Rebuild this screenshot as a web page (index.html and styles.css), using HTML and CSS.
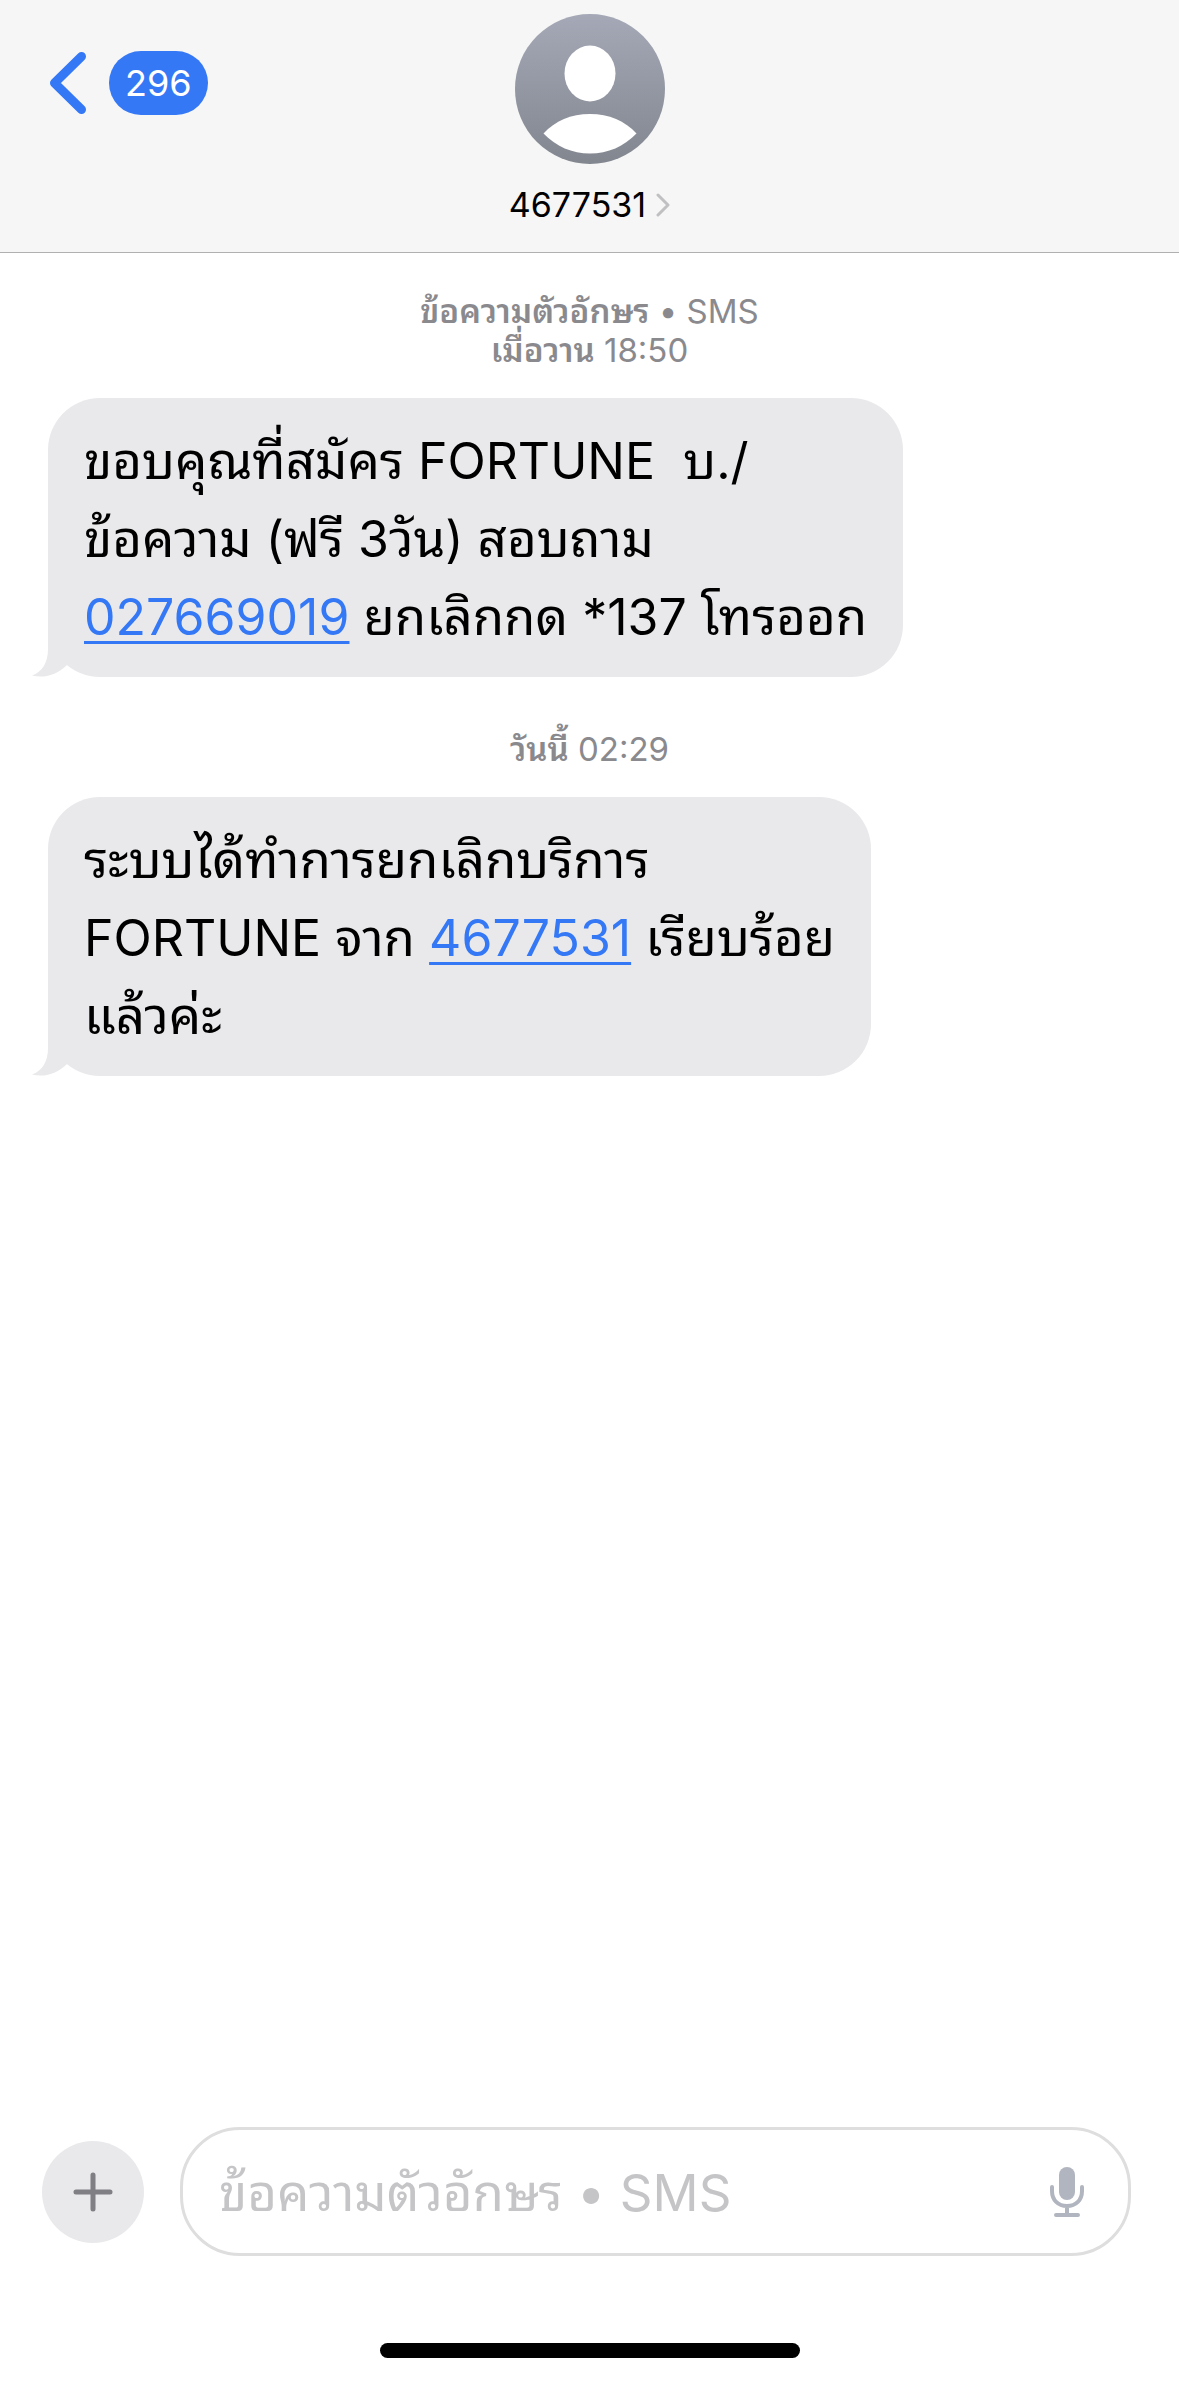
FILE: index.html
```html
<!DOCTYPE html>
<html lang="th">
<head>
<meta charset="utf-8">
<meta name="viewport" content="width=device-width, initial-scale=1">
<title>4677531</title>
<link rel="stylesheet" href="styles.css">
</head>
<body>
<header class="header">
  <button class="back" type="button" aria-label="Back">
    <svg class="back-icon" viewBox="0 0 38 64" aria-hidden="true"><path d="M33 5.500L6 32L33 58.500"/></svg>
    <span class="badge">296</span>
  </button>
  <a class="contact" href="#contact">
    <svg class="avatar" viewBox="0 0 150 150" aria-hidden="true">
      <defs><linearGradient id="avatar-fill" x1="0" y1="0" x2="0" y2="1"><stop offset="0" stop-color="#a5a9b7"/><stop offset="1" stop-color="#82868f"/></linearGradient></defs>
      <circle cx="75" cy="75" r="75" fill="url(#avatar-fill)"/>
      <ellipse cx="75" cy="59.500" rx="25.500" ry="28" fill="#fff"/>
      <path d="M28.500 119.500C40 107 56 100 75 100S110 107 121.500 119.500C109 132.500 93 139.500 75 139.500S41 132.500 28.500 119.500Z" fill="#fff"/>
    </svg>
    <span class="name">4677531<svg class="name-icon" viewBox="0 0 14 24" aria-hidden="true"><path d="M2 2L12 12L2 22"/></svg></span>
  </a>
</header>

<main class="thread">
  <p class="meta"><b>ข้อความตัวอักษร</b> • SMS<br><b>เมื่อวาน</b> 18:50</p>
  <div class="bubble">
    <svg class="tail" viewBox="0 0 36 56" aria-hidden="true"><path d="M16 0V28C16 42 10 51 0 54.500C13 58 26 53 35 44V0Z"/></svg>
    <p class="text"><span class="thai">ขอบคุณที่สมัคร</span> FORTUNE&nbsp; <span class="thai">บ</span>./<br><span class="thai">ข้อความ</span> (<span class="thai">ฟรี</span> 3<span class="thai">วัน</span>) <span class="thai">สอบถาม</span><br><a href="tel:027669019">027669019</a> <span class="thai">ยกเลิกกด</span> *137 <span class="thai">โทรออก</span></p>
  </div>
  <p class="meta"><b>วันนี้</b> 02:29</p>
  <div class="bubble">
    <svg class="tail" viewBox="0 0 36 56" aria-hidden="true"><path d="M16 0V28C16 42 10 51 0 54.500C13 58 26 53 35 44V0Z"/></svg>
    <p class="text"><span class="thai">ระบบได้ทำการยกเลิกบริการ</span><br>FORTUNE <span class="thai">จาก</span> <a href="tel:4677531">4677531</a> <span class="thai">เรียบร้อย</span><br><span class="thai">แล้วค่ะ</span></p>
  </div>
</main>

<footer class="footer">
  <form class="composer">
    <button class="add" type="button" aria-label="Add">
      <svg class="add-icon" viewBox="0 0 40 40" aria-hidden="true"><path d="M20 3V37M3 20H37"/></svg>
    </button>
    <div class="field">
      <input class="input" type="text" placeholder="ข้อความตัวอักษร • SMS" aria-label="ข้อความตัวอักษร • SMS">
      <button class="mic" type="button" aria-label="Dictate">
        <svg class="mic-icon" viewBox="0 0 36 52" aria-hidden="true">
          <rect x="10" y="1" width="16" height="33" rx="8" fill="#b1b5bf" stroke="none"/>
          <path d="M3 21V25C3 34 9 40 18 40S33 34 33 25V21M18 40V48M7 49H29"/>
        </svg>
      </button>
    </div>
  </form>
  <div class="home"></div>
</footer>
</body>
</html>
```
FILE: styles.css
```css
* {
  box-sizing: border-box;
}

body {
  margin: 0;
  min-height: 100vh;
  display: flex;
  flex-direction: column;
  background: #fff;
  color: #000;
  font-family: Inter, Thonburi, "Noto Sans Thai Looped", Loma, Garuda, Waree, "Noto Sans Thai", "Noto Sans", sans-serif;
}

button {
  border: 0;
  padding: 0;
  background: none;
  font: inherit;
}

p {
  margin: 0;
}

svg {
  display: block;
  flex: none;
}

.header {
  display: grid;
  grid-template-columns: 1fr auto 1fr;
  align-items: start;
  padding: 14px 48px 25px;
  background: #f6f6f6;
  border-bottom: 1px solid #b0b0b0;
}

.back {
  display: flex;
  align-items: center;
  justify-self: start;
  gap: 22px;
  margin-top: 37px;
}

.back-icon {
  width: 39px;
  height: 64px;
  fill: none;
  stroke: #3478f6;
  stroke-width: 9;
  stroke-linecap: round;
  stroke-linejoin: round;
}

.badge {
  padding: 0 16px;
  border-radius: 32px;
  background: #3478f6;
  color: #fff;
  font-size: 36px;
  line-height: 64px;
}

.contact {
  display: flex;
  flex-direction: column;
  align-items: center;
  gap: 19px;
  color: #000;
  text-decoration: none;
}

.avatar {
  width: 150px;
  height: 150px;
}

.name {
  display: flex;
  align-items: center;
  gap: 10px;
  font-size: 34px;
  line-height: 44px;
}

.name-icon {
  width: 14px;
  height: 24px;
  fill: none;
  stroke: #c0c0c3;
  stroke-width: 3;
  stroke-linecap: round;
  stroke-linejoin: round;
}

.thread {
  flex: 1;
  display: flex;
  flex-direction: column;
  align-items: flex-start;
  padding: 39px 48px;
}

.meta {
  align-self: center;
  margin-bottom: 28px;
  color: #8a8a8e;
  font-size: 33px;
  line-height: 39px;
  text-align: center;
}

.meta b {
  font-weight: 600;
}

.bubble {
  position: relative;
  margin-bottom: 53px;
  padding: 24px 36px 21px;
  border-radius: 52px;
  background: #e9e9eb;
}

.text {
  font-size: 50px;
  line-height: 78px;
}

.thai {
  font-size: 51px;
  line-height: 1;
}

.text a {
  color: #3478f6;
  text-decoration-thickness: 3px;
  text-underline-offset: 6px;
}

.tail {
  position: absolute;
  left: -16px;
  bottom: 0;
  width: 36px;
  height: 56px;
  fill: #e9e9eb;
}

.composer {
  display: flex;
  align-items: center;
  gap: 36px;
  padding: 0 48px 0 42px;
}

.add {
  display: grid;
  place-items: center;
  flex: none;
  width: 102px;
  height: 102px;
  border-radius: 50%;
  background: #e9e9eb;
}

.add-icon {
  width: 40px;
  height: 40px;
  fill: none;
  stroke: #7f7f84;
  stroke-width: 5;
  stroke-linecap: round;
}

.field {
  flex: 1;
  display: flex;
  align-items: center;
  height: 129px;
  padding: 0 43px 0 36px;
  border: 3px solid #dedede;
  border-radius: 60px;
}

.input {
  flex: 1;
  min-width: 0;
  height: 90px;
  padding: 2px 0 0;
  border: 0;
  outline: 0;
  background: none;
  font: inherit;
  font-size: 51px;
}

.input::placeholder {
  color: #c5c5c7;
  opacity: 1;
}

.mic-icon {
  width: 36px;
  height: 52px;
  fill: none;
  stroke: #b1b5bf;
  stroke-width: 4;
  stroke-linecap: round;
}

.home {
  width: 420px;
  height: 15px;
  margin: 87px auto 24px;
  border-radius: 8px;
  background: #000;
}
```
